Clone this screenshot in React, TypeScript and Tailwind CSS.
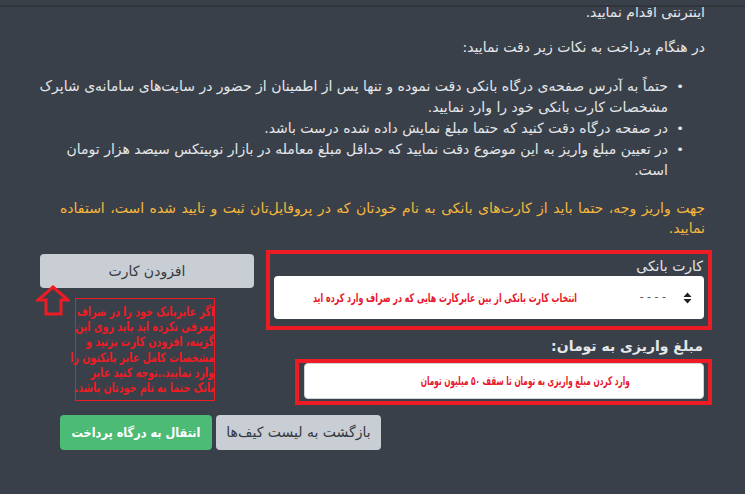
import React from "react";

const font = { fontFamily: '"DejaVu Sans", sans-serif' };

function SortIcon() {
  return (
    <svg width="9" height="12" viewBox="0 0 9 12" className="block h-[12px] w-[9px] shrink-0">
      <path d="M4.5 0.5 L8.5 5 L0.5 5 Z" fill="#222222" />
      <path d="M4.5 11.5 L8.5 7 L0.5 7 Z" fill="#222222" />
    </svg>
  );
}

function UpArrow() {
  return (
    <svg width="34" height="32" viewBox="0 0 34 32" className="block shrink-0">
      <path
        d="M17 2 L32 15 L25 15 L25 29 L10 29 L10 15 L2 15 Z"
        fill="none"
        stroke="#ed1c24"
        strokeWidth="3"
        strokeLinejoin="miter"
      />
    </svg>
  );
}

export default function App() {
  return (
    <div
      dir="rtl"
      style={font}
      className="relative w-[745px] h-[494px] overflow-hidden bg-[#3a4049] text-[#e4e7ea]"
    >
      <div className="absolute left-0 right-0 top-[5px] h-[2px] bg-[#30353b]" />

      <div className="pr-[40px] pl-[60px] pt-[2px] text-[14px] leading-[21px]">
        <p>اینترنتی اقدام نمایید.</p>
        <p className="mt-[14px]">در هنگام پرداخت به نکات زیر دقت نمایید:</p>
        <div className="mt-[18px] pr-[37px]">
          <div className="relative flex">
            <span className="absolute -right-[16px] top-0 text-[13px]">•</span>
            <p className="whitespace-nowrap">
              حتماً به آدرس صفحه‌ی درگاه بانکی دقت نموده و تنها پس از اطمینان از حضور در سایت‌های سامانه‌ی شاپرک
              <br />
              مشخصات کارت بانکی خود را وارد نمایید.
            </p>
          </div>
          <div className="relative flex">
            <span className="absolute -right-[16px] top-0 text-[13px]">•</span>
            <p className="whitespace-nowrap">در صفحه درگاه دقت کنید که حتما مبلغ نمایش داده شده درست باشد.</p>
          </div>
          <div className="relative flex">
            <span className="absolute -right-[16px] top-0 text-[13px]">•</span>
            <p className="whitespace-nowrap">
              در تعیین مبلغ واریز به این موضوع دقت نمایید که حداقل مبلغ معامله در بازار نوبیتکس سیصد هزار تومان
              <br />
              است.
            </p>
          </div>
        </div>
        <div className="mt-[17px] text-[#f5b83d] leading-[20px]">
          <p className="text-justify [text-align-last:justify]">
            جهت واریز وجه، حتما باید از کارت‌های بانکی به نام خودتان که در پروفایل‌تان ثبت و تایید شده است، استفاده
          </p>
          <p>نمایید.</p>
        </div>
      </div>

      <div className="mt-[12px] flex items-start gap-[12px] pr-[33px] pl-[40px]">
        {/* right column */}
        <div className="w-[446px] shrink-0">
          <div className="border-4 border-[#ed1c24] pt-[3px] pb-[7px] pr-[4px] pl-[4px]">
            <div className="pr-[1px] text-[14px] leading-[18px] text-[#e4e7ea]">کارت بانکی</div>
            <div className="mt-[1px] flex h-[43px] items-center overflow-hidden rounded-[4px] bg-white pr-[12px]">
              <SortIcon />
              <span className="mr-[17px] shrink-0 whitespace-nowrap text-[11px] text-[#444]">- - - -</span>
              <div className="mr-[24px] flex min-w-0 flex-1 justify-center">
                <span className="inline-block shrink-0 origin-center scale-x-[0.66] whitespace-nowrap text-[12px] font-bold text-[#e8172c]">
                  انتخاب کارت بانکی از بین عابرکارت هایی که در صراف وارد کرده اید
                </span>
              </div>
            </div>
          </div>
          <div className="mt-[6px] pr-[9px] text-[14px] font-bold leading-[20px] text-[#e4e7ea]">
            مبلغ واریزی به تومان:
          </div>
          <div className="mr-0 ml-[29px] mt-[3px] border-4 border-[#ed1c24] pb-[2px] pl-[5px] pr-[4px]">
            <div className="flex h-[36px] items-center justify-center overflow-hidden rounded-[4px] border border-[#ced4da] bg-white pl-[42px]">
              <span className="inline-block shrink-0 origin-center scale-x-[0.61] whitespace-nowrap text-[12px] font-bold text-[#e8172c]">
                وارد کردن مبلغ واریزی به تومان تا سقف ۵۰ میلیون تومان
              </span>
            </div>
          </div>
        </div>

        {/* left column */}
        <div className="mt-[4px] w-[214px] shrink-0">
          <div className="flex h-[34px] items-center justify-center rounded-[4px] bg-[#c9cdd4] text-[14px] text-[#343a40]">
            افزودن کارت
          </div>
          <div dir="ltr" className="-mt-[3px] flex items-start">
            <div className="-ml-[4px]">
              <UpArrow />
            </div>
            <div
              dir="rtl"
              className="ml-[5px] mt-[13px] w-[140px] overflow-visible border border-[#ed1c24] pt-[5px] pb-[5px] text-[13px] font-bold leading-[15.2px] text-[#ed1c24]"
            >
              <p className="origin-right scale-x-[0.73] whitespace-nowrap">
                اگر عابربانک خود را در صراف
                <br />
                معرفی نکرده اید باید روی این
                <br />
                گزینه، افزودن کارت بزنید و
                <br />
                مشخصات کامل عابر بانکتون را
                <br />
                وارد نمایید..توجه کنید عابر
                <br />
                بانک حتما به نام خودتان باشد.
              </p>
            </div>
          </div>
        </div>
      </div>

      <div className="mt-[10px] flex justify-end gap-[4px] pl-[60px]">
        <div className="flex h-[35px] w-[165px] items-center justify-center rounded-[4px] bg-[#c9cdd4] text-[14px] text-[#343a40]">
          بازگشت به لیست کیف‌ها
        </div>
        <div className="flex h-[35px] w-[152px] items-center justify-center overflow-hidden rounded-[4px] bg-[#4cbb76] text-white">
          <span className="inline-block shrink-0 scale-x-[0.87] whitespace-nowrap text-[13px] font-bold">
            انتقال به درگاه پرداخت
          </span>
        </div>
      </div>
    </div>
  );
}
